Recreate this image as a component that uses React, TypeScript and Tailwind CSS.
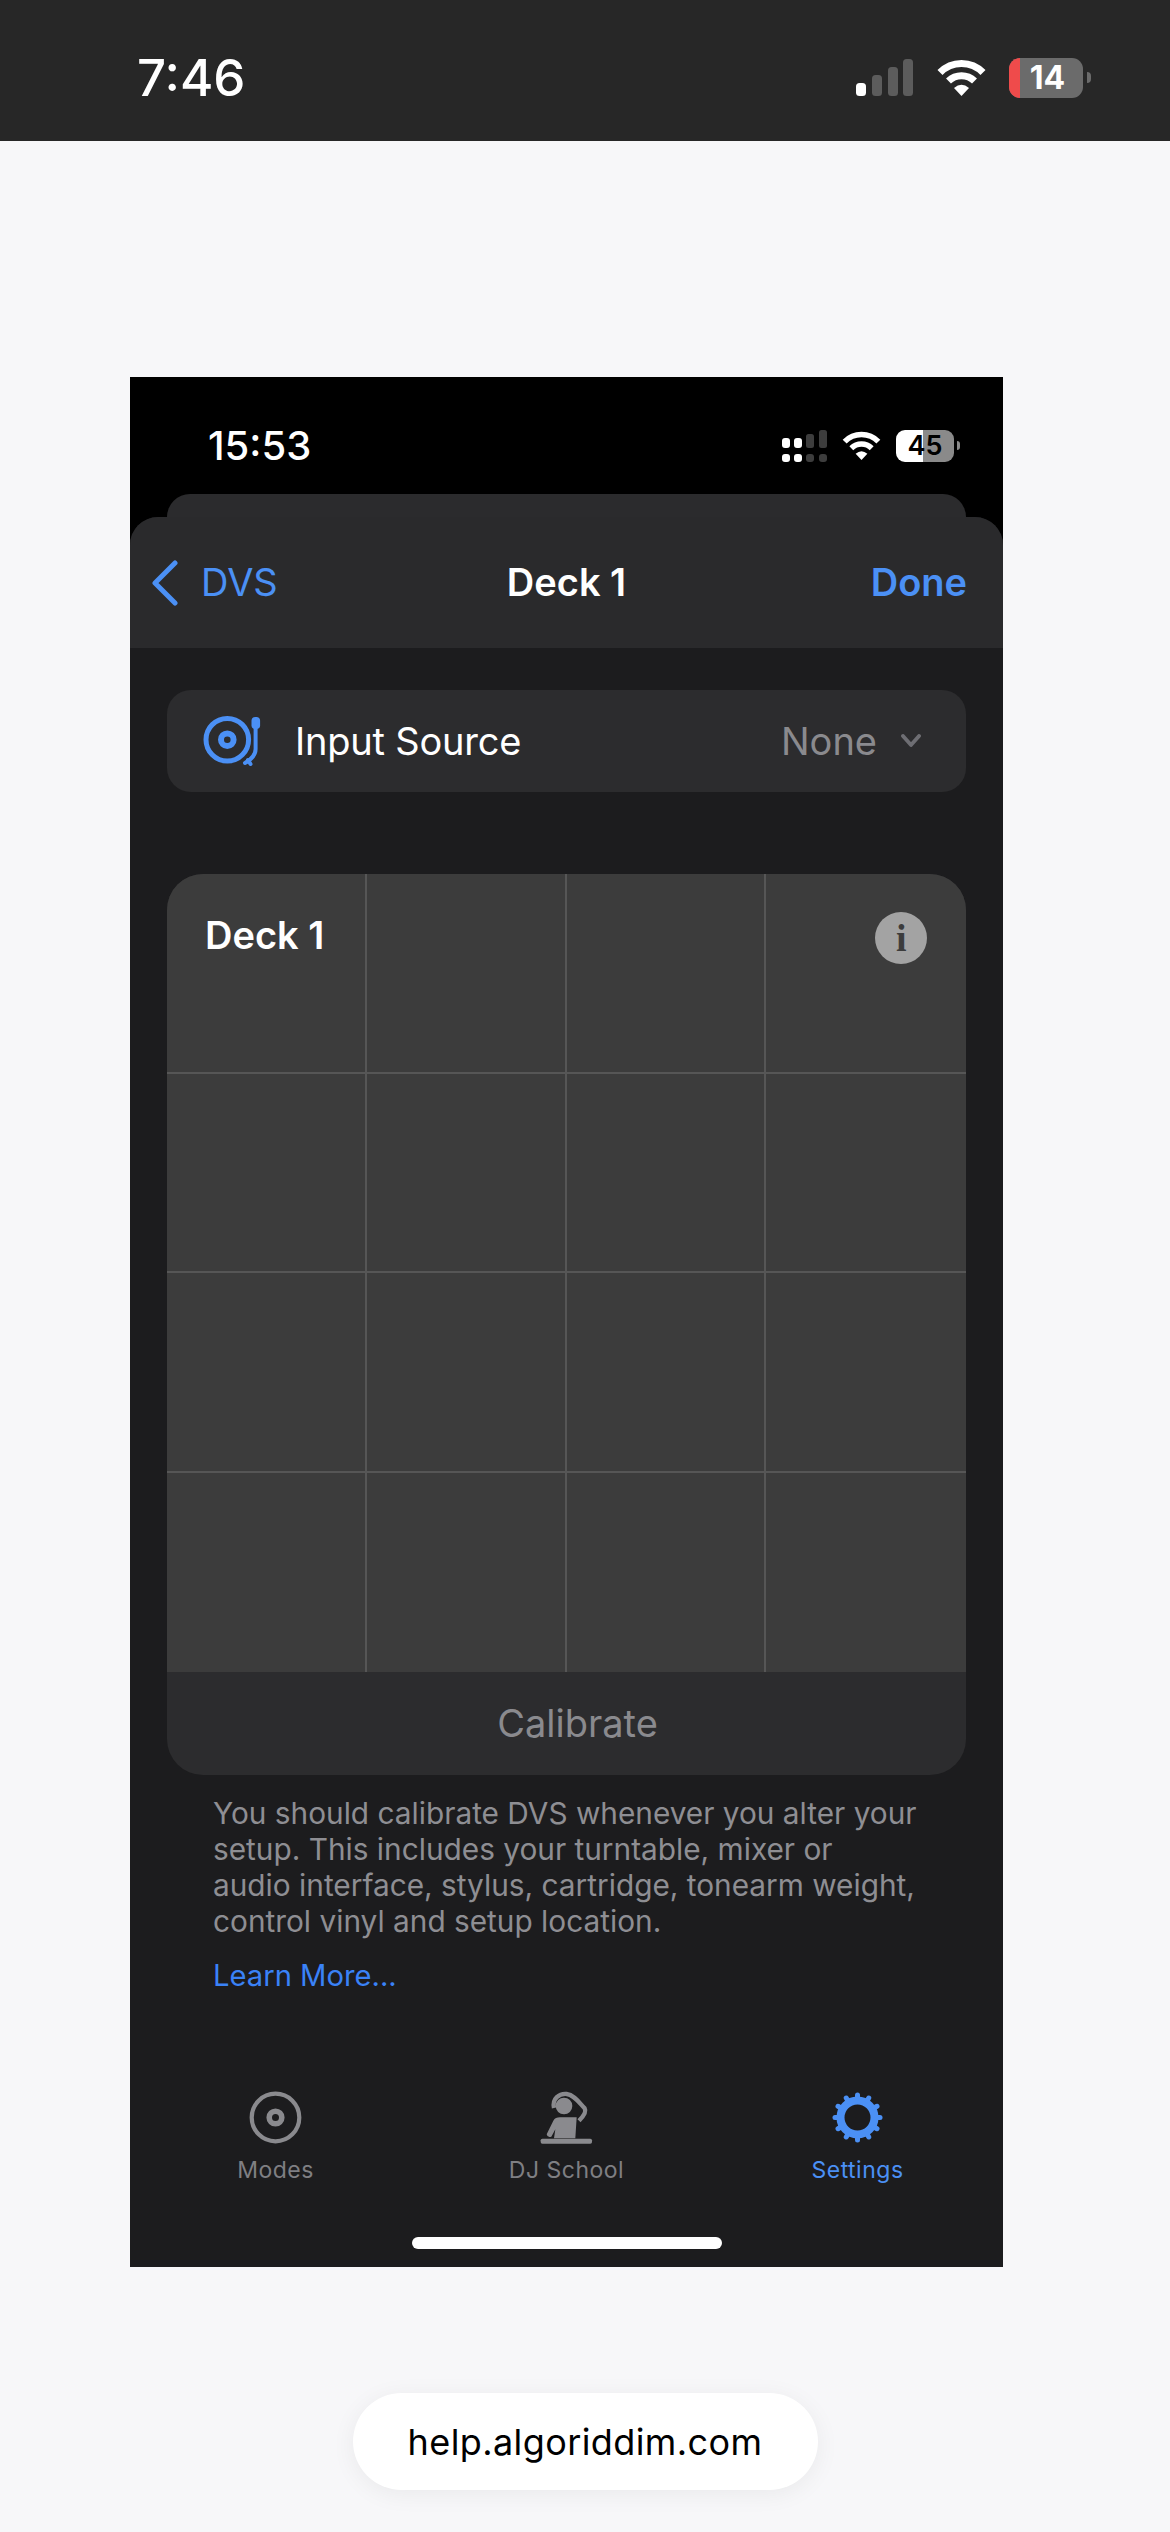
const BLUE = "#4b90f5";
const GRAY = "#8a8a8e";

const WifiIcon = ({ className }: { className: string }) => (
  <svg viewBox="0 0 49 37" className={className} fill="none">
    <path d="M3 13.5 A30 30 0 0 1 46 13.5" stroke="#fff" strokeWidth="7" />
    <path d="M11.5 22 A18.5 18.5 0 0 1 37.5 22" stroke="#fff" strokeWidth="7" />
    <path d="M17 29 Q24.5 22.5 32 29 L24.5 37 Z" fill="#fff" />
  </svg>
);

const OuterSignal = () => (
  <svg viewBox="0 0 57 37" className="w-[57px] h-[37px]">
    <rect x="0" y="24" width="10" height="13" rx="3.5" fill="#fff" />
    <rect x="16" y="16" width="10" height="21" rx="3.5" fill="#5c5c5c" />
    <rect x="32" y="8" width="10" height="29" rx="3.5" fill="#5c5c5c" />
    <rect x="47" y="0" width="10" height="37" rx="3.5" fill="#5c5c5c" />
  </svg>
);

const InnerSignal = () => (
  <svg viewBox="0 0 45 32" className="w-[45px] h-[32px]">
    <rect x="0" y="8" width="8" height="10" rx="3" fill="#fff" />
    <rect x="12" y="8" width="8" height="10" rx="3" fill="#fff" />
    <rect x="24" y="4" width="8" height="14" rx="2.5" fill="#3d3d3d" />
    <rect x="37" y="0" width="8" height="18" rx="2.5" fill="#3d3d3d" />
    <rect x="0" y="24" width="8" height="8" rx="3" fill="#fff" />
    <rect x="12" y="24" width="8" height="8" rx="3" fill="#fff" />
    <rect x="24" y="24" width="8" height="8" rx="3" fill="#3d3d3d" />
    <rect x="37" y="24" width="8" height="8" rx="3" fill="#3d3d3d" />
  </svg>
);

const TurntableIcon = () => (
  <svg viewBox="10 14 64 56" className="w-[64px] h-[56px]" fill="none" stroke={BLUE}>
    <circle cx="37.3" cy="40.7" r="21.3" strokeWidth="5" />
    <circle cx="37.3" cy="40.7" r="6.3" strokeWidth="6" />
    <path d="M65.6 26 V50 Q65.6 58 55 64" strokeWidth="4" strokeLinecap="round" />
    <path d="M58 61 L60.5 65" strokeWidth="4" strokeLinecap="round" />
    <rect x="61.5" y="18" width="8.6" height="12" rx="3.8" fill={BLUE} stroke="none" />
  </svg>
);

const InfoIcon = () => (
  <div className="w-[52px] h-[52px] rounded-full bg-[#a3a3a3] flex items-center justify-center">
    <span className="text-[#3c3c3c] text-[38px] leading-none font-bold font-['Liberation_Serif',serif]">i</span>
  </div>
);

const ModesIcon = () => (
  <svg viewBox="0 0 55 55" className="w-[55px] h-[55px]" fill="none" stroke={GRAY}>
    <circle cx="27.5" cy="27.5" r="23.8" strokeWidth="4.2" />
    <circle cx="27.5" cy="27.5" r="6.3" strokeWidth="5.6" />
  </svg>
);

const DjIcon = () => (
  <svg viewBox="85 60 165 165" className="w-[55px] h-[55px]" fill={GRAY}>
    <circle cx="160" cy="108" r="25" />
    <path d="M130 114 C124 85 146 70 168 72 C190 74 205 97 222 115 C228 125 220 137 205 152" fill="none" stroke={GRAY} strokeWidth="13" />
    <path d="M108 193 L128 152 Q134 142 148 142 L198 142 L194 205 L130 205 L134 178 L122 200 Q110 204 108 193 Z" />
    <rect x="90" y="206" width="154" height="15" rx="5" />
  </svg>
);

const GearIcon = () => (
  <svg viewBox="0 0 55 55" className="w-[55px] h-[55px]" fill="none" stroke={BLUE}>
    <circle cx="27.5" cy="27.5" r="17" strokeWidth="8" />
    {Array.from({ length: 12 }, (_, i) => (
      <line key={i} x1="27.5" y1="8" x2="27.5" y2="5" strokeWidth="5" strokeLinecap="round" transform={`rotate(${i * 30} 27.5 27.5)`} />
    ))}
  </svg>
);

const tabs = [
  { label: "Modes", icon: <ModesIcon />, color: "text-[#7f7f83]" },
  { label: "DJ School", icon: <DjIcon />, color: "text-[#7f7f83]" },
  { label: "Settings", icon: <GearIcon />, color: "text-[#4b90f5]" },
];

const cells = Array.from({ length: 16 }, (_, i) => i);

const App = () => {
  return (
    <div className="w-[1170px] h-[2532px] overflow-hidden bg-[#f7f7f9] font-['Inter',sans-serif]">
      {/* screenshot's own status bar */}
      <div className="h-[141px] bg-[#272727] flex items-center pt-[14px] pl-[137px] pr-[79px] text-white">
        <span className="text-[51px] font-medium leading-none">7:46</span>
        <div className="ml-auto flex items-center">
          <OuterSignal />
          <WifiIcon className="w-[49px] h-[37px] ml-[24px]" />
          <div className="ml-[23px] w-[74px] h-[40px] rounded-[11px] overflow-hidden flex bg-[#6b6b6b]">
            <div className="w-[11px] bg-[#ef4b4b]" />
            <span className="flex-1 text-center text-[32px] font-bold leading-[40px] pr-[8px]">14</span>
          </div>
          <div className="ml-[4px] w-[4px] h-[11px] rounded-r-full bg-[#6b6b6b]" />
        </div>
      </div>

      {/* phone */}
      <div className="mt-[236px] ml-[130px] w-[873px] h-[1890px] bg-black flex flex-col">
        <div className="h-[117px] flex items-center pt-[20px] pl-[78px] pr-[43px] text-white shrink-0">
          <span className="text-[40px] font-medium leading-none">15:53</span>
          <div className="ml-auto flex items-center">
            <InnerSignal />
            <WifiIcon className="w-[39px] h-[29px] ml-[15px]" />
            <div className="ml-[15px] w-[58px] h-[32px] rounded-[9px] overflow-hidden relative flex">
              <div className="w-[27px] bg-white" />
              <div className="flex-1 bg-[#8a8a8a]" />
              <span className="absolute inset-0 text-center text-black text-[27px] font-semibold leading-[32px]">45</span>
            </div>
            <div className="ml-[3px] w-[3px] h-[9px] rounded-r-full bg-[#8a8a8a]" />
          </div>
        </div>
        <div className="h-[23px] mx-[37px] bg-[#2b2b2d] rounded-t-[24px] shrink-0" />

        <div className="flex-1 flex flex-col bg-[#1c1c1e] rounded-t-[28px] overflow-hidden">
          <div className="h-[131px] shrink-0 bg-[#2a2a2c] flex items-center justify-between pl-[21px] pr-[36px] relative">
            <div className="flex items-center">
              <svg viewBox="0 0 28 46" className="w-[28px] h-[46px]" fill="none" stroke={BLUE} strokeWidth="5" strokeLinecap="round" strokeLinejoin="round">
                <path d="M24 3 L4 23 L24 43" />
              </svg>
              <span className="ml-[22px] text-[38px] text-[#4b90f5]">DVS</span>
            </div>
            <span className="absolute left-0 right-0 text-center text-[38px] font-semibold text-white">Deck 1</span>
            <span className="text-[38px] font-semibold text-[#4b90f5] relative">Done</span>
          </div>

          <div className="mt-[42px] mx-[37px] h-[102px] shrink-0 rounded-[24px] bg-[#2c2c2e] flex items-center pl-[33px] pr-[45px]">
            <TurntableIcon />
            <span className="ml-[31px] text-[38px] tracking-[-0.2px] text-white">Input Source</span>
            <span className="ml-auto text-[38px] text-[#8a8a8e]">None</span>
            <svg viewBox="0 0 20 14" className="ml-[24px] w-[20px] h-[14px]" fill="none" stroke="#6e6e73" strokeWidth="3.8" strokeLinecap="round" strokeLinejoin="round">
              <path d="M2 2 L10 11 L18 2" />
            </svg>
          </div>

          <div className="mt-[82px] mx-[37px] h-[901px] shrink-0 rounded-[36px] overflow-hidden bg-[#2c2c2e] flex flex-col">
            <div className="h-[798px] grid grid-cols-4 grid-rows-4 bg-[#3c3c3c]">
              {cells.map((i) => (
                <div key={i} className={`border-[#565656] ${i % 4 === 3 ? "" : "border-r-2"} ${i >= 12 ? "" : "border-b-2"}`}>
                  {i === 0 && <p className="pl-[38px] pt-[36px] text-[38px] leading-[50px] font-semibold text-white">Deck 1</p>}
                  {i === 3 && (
                    <div className="pt-[38px] pl-[109px]">
                      <InfoIcon />
                    </div>
                  )}
                </div>
              ))}
            </div>
            <div className="flex-1 flex items-center justify-center pl-[22px] text-[38px] text-[#8a8a8e]">Calibrate</div>
          </div>

          <p className="mt-[20px] pl-[83px] text-[29.8px] leading-[36px] text-[#8e8e93] whitespace-nowrap">
            You should calibrate DVS whenever you alter your<br />
            setup. This includes your turntable, mixer or<br />
            audio interface, stylus, cartridge, tonearm weight,<br />
            control vinyl and setup location.
          </p>
          <p className="mt-[19px] pl-[83px] text-[29.2px] leading-[36px] text-[#3a82f7]">Learn More...</p>

          <div className="mt-[96px] grid grid-cols-3">
            {tabs.map((tab) => (
              <div key={tab.label} className="flex flex-col items-center">
                {tab.icon}
                <span className={`mt-[11px] text-[23px] leading-[28px] tracking-[0.5px] ${tab.color}`}>{tab.label}</span>
              </div>
            ))}
          </div>

          <div className="mt-[53px] mx-auto w-[310px] h-[12px] rounded-full bg-white shrink-0" />
        </div>
      </div>

      {/* url pill */}
      <div className="mt-[126px] mx-auto w-[465px] h-[97px] rounded-full bg-white shadow-[0_4px_24px_rgba(0,0,0,0.06)] flex items-center justify-center">
        <span className="text-[36px] tracking-[0.4px] text-black">help.algoriddim.com</span>
      </div>
    </div>
  );
};

export default App;
